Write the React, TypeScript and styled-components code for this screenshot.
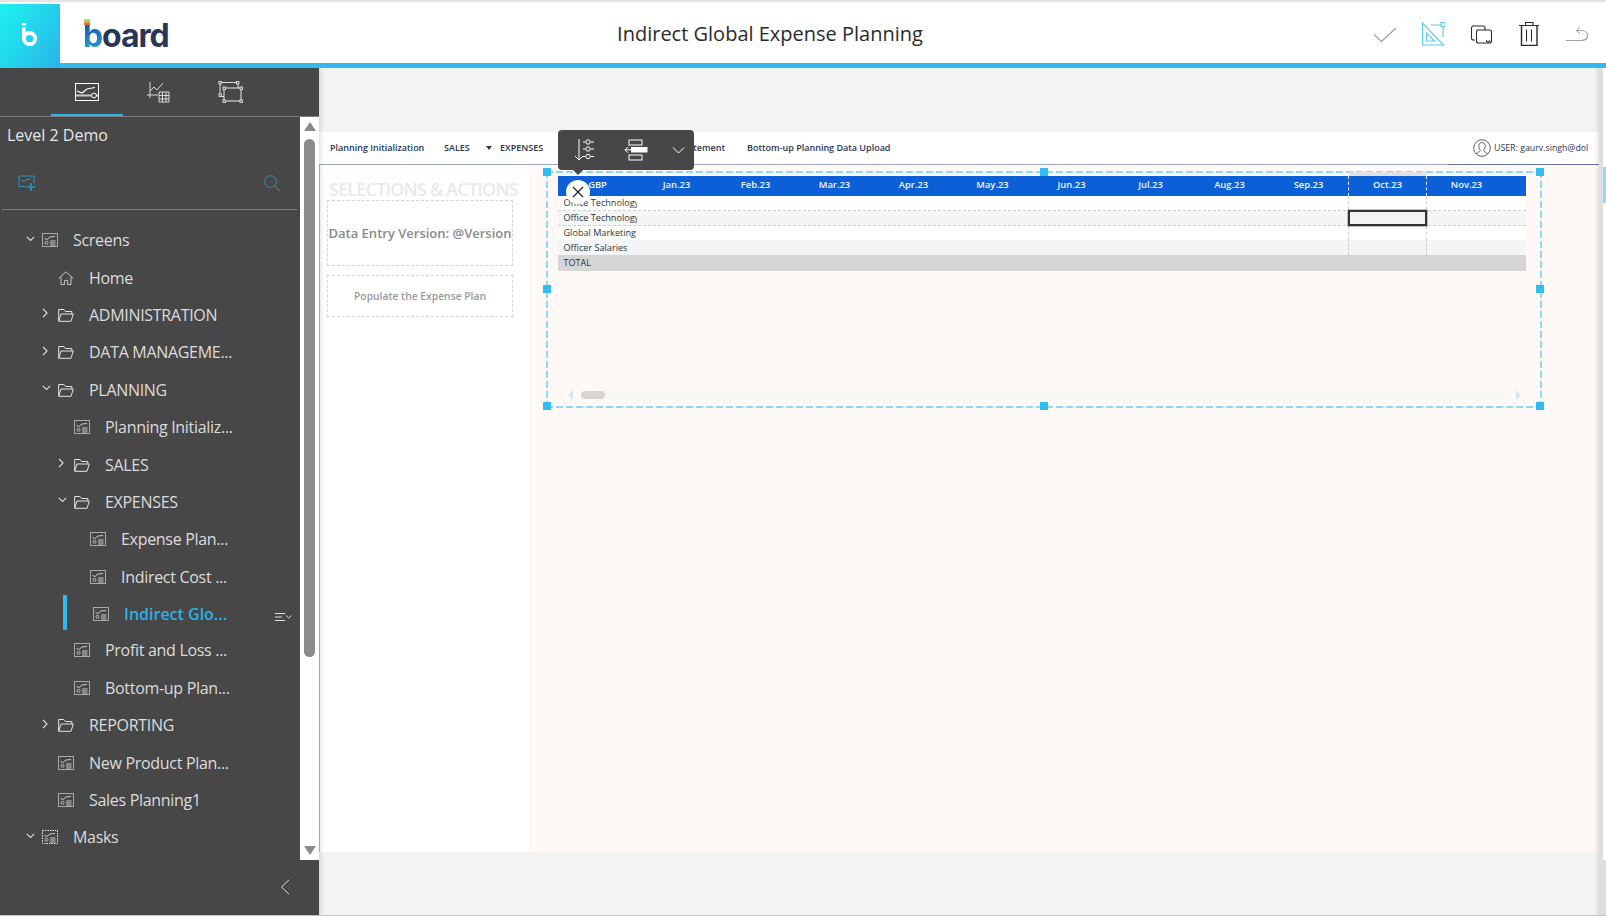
import React from "react";
import styled, { createGlobalStyle } from "styled-components";

const Global = createGlobalStyle`
  html, body { margin: 0; padding: 0; background: #fff; overflow: hidden; }
  #root { width: 1606px; height: 916px; }
  * { box-sizing: border-box; }
`;

const Page = styled.div`
  width: 1606px; height: 916px; display: flex; flex-direction: column;
  font-family: "Open Sans", "Liberation Sans", sans-serif;
  border-bottom: 1px solid #c4c4c4; overflow: hidden; background: #fff;
`;
const TopLine = styled.div`height: 2px; background: #e4e4e4; flex: none;`;
const Gap = styled.div`height: 2px; flex: none; background: #fff;`;
const Header = styled.header`
  height: 64px; flex: none; display: flex; border-bottom: 5px solid #2fb9ee; background: #fff; position: relative;
`;
const LogoTile = styled.div`
  width: 60px; height: 64px; flex: none; display: flex; justify-content: center; padding-top: 19px;
  background: linear-gradient(125deg, #1df3ee 0%, #2ab3e9 100%);
`;
const LogoWrap = styled.div`width: 190px; flex: none; padding: 13px 0 0 23px; position: relative;`;
const Wordmark = styled.div`
  font-family: "Inter", "Liberation Sans", sans-serif; font-weight: 700; font-size: 32px; line-height: 38px;
  letter-spacing: -1.1px; color: #2a3657; position: relative; width: fit-content;
`;
const WordB = styled.span`
  background: linear-gradient(#1a5aa8 20%, #2aa8e0 100%); -webkit-background-clip: text; background-clip: text; color: transparent;
`;
const Stripes = styled.div`
  position: absolute; left: 1px; top: 2px; width: 6px; height: 6px;
  background: linear-gradient(#c5d65a 0 33%, #e8a34f 33% 66%, #e0685a 66%);
`;
const Title = styled.h1`
  flex: 1; margin: 0; text-align: center; font-size: 20px; line-height: 25px; padding-top: 17px;
  font-weight: 400; color: #2b2b2b;
`;
const Actions = styled.div`
  width: 316px; flex: none; display: flex; justify-content: flex-end; gap: 24px; padding: 16px 17px 0 0;
`;
const ActionIcon = styled.svg`width: 24px; height: 26px; display: block; fill: none;`;

const Body = styled.div`flex: 1; display: flex; min-height: 0;`;
const Sidebar = styled.aside`
  width: 319px; flex: none; background: #474747; display: flex; flex-direction: column; color: #ddd;
`;
const Tabs = styled.div`
  height: 49px; flex: none; display: flex; padding-left: 51px; border-bottom: 1px solid #7c7c7c;
`;
const Tab = styled.div<{ $active?: boolean }>`
  width: 72px; height: 48px; display: flex; align-items: center; justify-content: center; padding-top: 1px;
  border-bottom: 2px solid ${(p) => (p.$active ? "#2fb4ea" : "transparent")};
`;
const TabIcon = styled.svg`width: 26px; height: 22px; display: block; fill: none;`;
const SideMiddle = styled.div`flex: 1; display: flex; min-height: 0;`;
const SideMain = styled.div`width: 300px; flex: none; display: flex; flex-direction: column;`;
const ProjectName = styled.div`
  font-size: 16px; line-height: 22px; color: #e6e6e6; padding: 7px 0 0 7px; height: 46px; flex: none;
`;
const ToolRow = styled.div`
  height: 47px; flex: none; margin: 0 3px 0 2px; padding: 11px 16px 0 16px; display: flex; justify-content: space-between;
  align-items: flex-start; border-bottom: 1px solid #7c7c7c;
`;
const ToolIcon = styled.svg`width: 18px; height: 18px; display: block; fill: none;`;
const Tree = styled.div`padding-top: 11.5px; display: flex; flex-direction: column;`;
const TreeRow = styled.div<{ $depth: number; $active?: boolean }>`
  height: ${(p) => (p.$active ? "36.4px" : "37.4px")}; flex: none; display: flex; align-items: center; position: relative;
  padding-left: ${(p) => 26 + p.$depth * 16 + (p.$active ? 3 : 0)}px;
  color: ${(p) => (p.$active ? "#2bb1e8" : "#dcdcdc")};
  font-weight: ${(p) => (p.$active ? 600 : 400)};
  font-size: 16px; white-space: nowrap; letter-spacing: ${(p) => (p.$active ? "0" : "-0.3px")};
`;
const ChevronDown = styled.svg`width: 9px; height: 8px; flex: none; margin-right: 7px; fill: none; stroke: #e0e0e0; stroke-width: 1.1; margin-top: -3px;`;
const ChevronRight = styled.svg`width: 6px; height: 10px; flex: none; margin: -3px 10px 0 0; fill: none; stroke: #e8e8e8; stroke-width: 1.1;`;
const ChevronGap = styled.div`width: 16px; flex: none;`;
const RowIcon = styled.svg`width: 16px; height: 14px; flex: none; margin-right: 15px; fill: none; display: block;`;
const ActiveBar = styled.div`position: absolute; left: 63px; top: 0; width: 4px; height: 35px; background: #2fb9ee;`;
const RowMenu = styled.svg`position: absolute; left: 275px; top: 18px; width: 17px; height: 8px; fill: none; stroke: #ddd; stroke-width: 1;`;
const VScroll = styled.div`
  width: 19px; flex: none; background: #fff; display: flex; flex-direction: column; align-items: center; padding: 5px 0 5px;
`;
const VArrow = styled.div<{ $up?: boolean }>`
  width: 0; height: 0; flex: none; border-left: 6px solid transparent; border-right: 6px solid transparent;
  ${(p) => (p.$up ? "border-bottom: 9px solid #8a8a8a;" : "border-top: 9px solid #8a8a8a;")}
`;
const VThumb = styled.div`width: 11px; height: 518px; margin-top: 8px; border-radius: 6px; background: #8c8c8c; flex: none;`;
const VSpace = styled.div`flex: 1;`;
const SideBottom = styled.div`
  height: 55px; flex: none; display: flex; justify-content: flex-end; padding: 19px 29px 0 0;
`;
const Collapse = styled.svg`width: 10px; height: 16px; display: block; fill: none; stroke: #ddd; stroke-width: 1;`;

const Canvas = styled.main`
  flex: 1; min-width: 0; display: flex; flex-direction: column; position: relative; background: #f3f3f3;
`;
const Shade = styled.div`
  position: absolute; inset: 0; pointer-events: none; z-index: 5;
  box-shadow: inset 6px 0 6px -6px rgba(0,0,0,.22), inset -6px 0 6px -6px rgba(0,0,0,.18);
`;
const CanvasCols = styled.div`flex: 1; display: flex; min-height: 0;`;
const CanvasInner = styled.div`flex: 1; min-width: 0; display: flex; flex-direction: column;`;
const TopBand = styled.div`height: 64px; flex: none;`;
const BottomBand = styled.div`flex: 1;`;
const Nav = styled.nav`
  height: 32px; flex: none; background: #fff; display: flex; align-items: center; padding: 0 10px 1px 11px;
  font-size: 9px; font-weight: 600; color: #2c3652; white-space: nowrap;
`;
const NavItem = styled.div<{ $w?: number; $right?: boolean }>`
  flex: ${(p) => (p.$w ? `0 0 ${p.$w}px` : "1")};
  ${(p) => (p.$right ? "text-align: right; padding-right: 22px;" : "")}
`;
const NavCaret = styled.div`
  flex: 0 0 14px; width: 14px; position: relative;
  &::before {
    content: ""; position: absolute; left: 0; top: -2px; border-left: 3px solid transparent; border-right: 3px solid transparent;
    border-top: 4px solid #2c3652;
  }
`;
const UserBlock = styled.div`display: flex; align-items: center; gap: 3px; font-weight: 400; font-size: 8.8px;`;
const UserIcon = styled.svg`width: 18px; height: 18px; fill: none; stroke: #4a4f63; stroke-width: .9; display: block;`;
const UserText = styled.div`width: 95px; overflow: hidden;`;
const NavRule = styled.div`
  height: 1px; flex: none;
  background: linear-gradient(90deg, #a0a8c0 0, #a0a8c0 1129px, #66749e 1129px);
`;
const Content = styled.div`height: 687px; flex: none; display: flex; background: #fef9f6;`;
const LeftPanel = styled.div`
  width: 210px; flex: none; background: #fff; border-left: 1px solid #d9a9ad; padding: 14px 0 0 7px;
`;
const PanelTitle = styled.div`
  font-size: 18px; line-height: 21px; color: #e9e9e9; font-weight: 600; white-space: nowrap; letter-spacing: -0.8px; padding-left: 2px;
`;
const DashedBox = styled.div<{ $h: number; $mt: number; $size: number; $weight: number; $color: string }>`
  width: 186px; height: ${(p) => p.$h}px; margin-top: ${(p) => p.$mt}px; border: 1px dashed #d4d4d4; display: flex;
  align-items: center; justify-content: center; white-space: nowrap;
  font-size: ${(p) => p.$size}px; font-weight: ${(p) => p.$weight}; color: ${(p) => p.$color};
`;
const Main = styled.div`flex: 1; min-width: 0; padding: 6px 0 0 17px;`;
const dash = "#8fd9f4";
const Frame = styled.div`
  width: 996px; height: 237px; position: relative; padding: 5px 0 0 12px;
  background-image:
    repeating-linear-gradient(90deg, ${dash} 0 7px, transparent 7px 10px),
    repeating-linear-gradient(90deg, ${dash} 0 7px, transparent 7px 10px),
    repeating-linear-gradient(0deg, ${dash} 0 7px, transparent 7px 10px),
    repeating-linear-gradient(0deg, ${dash} 0 7px, transparent 7px 10px);
  background-size: 100% 2px, 100% 2px, 2px 100%, 2px 100%;
  background-position: 0 0, 0 100%, 0 0, 100% 0;
  background-repeat: no-repeat;
`;
const Handle = styled.div<{ $x: string; $y: string }>`
  position: absolute; width: 8px; height: 8px; background: #31bdf2; z-index: 3;
  left: ${(p) => p.$x}; top: ${(p) => p.$y}; transform: translate(-50%, -50%);
`;
const Toolbar = styled.div`
  position: absolute; left: 12px; top: -41px; width: 136px; height: 40px; border-radius: 4px; background: #474747;
  z-index: 4; display: flex; align-items: center; padding-left: 16px;
  &::after {
    content: ""; position: absolute; left: 15px; bottom: -5px; border-left: 5px solid transparent;
    border-right: 5px solid transparent; border-top: 5px solid #474747;
  }
`;
const TbIcon = styled.svg<{ $w: number; $ml: number }>`
  width: ${(p) => p.$w}px; height: 24px; margin-left: ${(p) => p.$ml}px; display: block; fill: none; stroke: #fff; flex: none;
`;
const CloseBtn = styled.div`
  position: absolute; left: 20px; top: 9px; width: 24px; height: 24px; border-radius: 50%; background: #fff; z-index: 4;
  display: flex; align-items: center; justify-content: center;
`;
const CloseIcon = styled.svg`width: 12px; height: 12px; fill: none; stroke: #222; stroke-width: 1.2; display: block;`;
const Table = styled.div`width: 968px; display: flex; flex-direction: column; font-size: 9.1px; color: #333;`;
const Row = styled.div<{ $bg: string; $h: number; $dashed?: boolean }>`
  display: grid; grid-template-columns: repeat(12, 79px) 1fr; background: ${(p) => p.$bg}; height: ${(p) => p.$h}px;
  ${(p) => (p.$dashed ? "border-bottom: 1px dashed #d0d0d0;" : "")}
  position: relative;
`;
const HeadCell = styled.div<{ $oct?: boolean }>`
  display: flex; align-items: center; justify-content: center; color: #f2f6ff; font-weight: 600; position: relative;
  padding-bottom: 3px; font-size: 9.4px;
  ${(p) => (p.$oct ? "border-left: 1px dashed #e8eefc; border-right: 1px dashed #e8eefc;" : "")}
`;
const OctTab = styled.div`position: absolute; left: 0; right: 0; top: -4px; height: 4px; background: #e2e2e2;`;
const LabelCell = styled.div<{ $lh: number }>`
  overflow: hidden; white-space: nowrap; padding-left: 5.5px; line-height: ${(p) => p.$lh}px;
`;
const DataCell = styled.div<{ $oct?: boolean }>`
  position: relative;
  ${(p) => (p.$oct ? "border-left: 1px dashed #d0d0d0; border-right: 1px dashed #d0d0d0;" : "")}
`;
const SelectedMark = styled.div`
  position: absolute; left: -1px; right: -1px; top: -1px; bottom: -1px; border: 2px solid #333;
  background: #f2f3f4; box-shadow: 0 0 0 .5px #888; z-index: 1;
`;
const HScroll = styled.div`
  width: 968px; margin-top: 120px; padding: 0 5px 0 10px; display: flex; align-items: center; height: 8px;
`;
const HArrow = styled.div<{ $left?: boolean }>`
  width: 0; height: 0; flex: none; border-top: 5px solid transparent; border-bottom: 5px solid transparent;
  ${(p) => (p.$left ? "border-right: 5px solid #d3e6f4; margin-right: 8px;" : "border-left: 5px solid #d3e6f4; margin-left: 11px;")}
`;
const HTrack = styled.div`flex: 1; height: 8px; border-radius: 4px; background: #f8f6f3;`;
const HThumb = styled.div`width: 24px; height: 8px; border-radius: 4px; background: #d8d4d0;`;
const RightGutter = styled.div`width: 7px; flex: none; background: #dedede; display: flex; justify-content: flex-end;`;
const GutterInner = styled.div`
  width: 3px; height: 792px; background: linear-gradient(#fff 0 99px, #92d9f2 99px 135px, #fff 135px);
`;

const ScreenGlyph: React.FC<{ masked?: boolean }> = ({ masked }) => (
  <RowIcon viewBox="0 0 16 14">
    <rect x=".5" y=".5" width="15" height="13" stroke={masked ? "#e8e8e8" : "#a8a8a8"} strokeDasharray={masked ? "1.5 1" : undefined} />
    <path d="M2.5 5.5 5 6.5 8 4 13 3.5" stroke="#d6d6d6" strokeWidth=".9" />
    <circle cx="4.5" cy="9.8" r="1.5" stroke="#d6d6d6" strokeWidth=".8" />
    <path d="M8 8h5.5M8 10h5.5M8 12h5.5" stroke="#d6d6d6" strokeWidth=".9" />
  </RowIcon>
);
const FolderGlyph = () => (
  <RowIcon viewBox="0 0 16 14" stroke="#e4e4e4" strokeWidth="1">
    <path d="M.7 13V1.5h5.2l1.6 2h6.3V6" />
    <path d="M.7 13.3 3 6h12.3L13 13.3z" />
  </RowIcon>
);
const HomeGlyph = () => (
  <RowIcon viewBox="0 0 16 14" stroke="#c4c4c4" strokeWidth="1">
    <path d="M.8 7.4 8 .8l7.2 6.6" />
    <path d="M3 6v7.5h3.4V9.4h3.2v4.1H13V6" />
  </RowIcon>
);

type Item = { label: string; depth: number; icon: "screen" | "folder" | "home" | "mask"; chev?: "down" | "right"; active?: boolean };
const items: Item[] = [
  { label: "Screens", depth: 0, icon: "screen", chev: "down" },
  { label: "Home", depth: 1, icon: "home" },
  { label: "ADMINISTRATION", depth: 1, icon: "folder", chev: "right" },
  { label: "DATA MANAGEME...", depth: 1, icon: "folder", chev: "right" },
  { label: "PLANNING", depth: 1, icon: "folder", chev: "down" },
  { label: "Planning Initializ...", depth: 2, icon: "screen" },
  { label: "SALES", depth: 2, icon: "folder", chev: "right" },
  { label: "EXPENSES", depth: 2, icon: "folder", chev: "down" },
  { label: "Expense Plan...", depth: 3, icon: "screen" },
  { label: "Indirect Cost ...", depth: 3, icon: "screen" },
  { label: "Indirect Glo...", depth: 3, icon: "screen", active: true },
  { label: "Profit and Loss ...", depth: 2, icon: "screen" },
  { label: "Bottom-up Plan...", depth: 2, icon: "screen" },
  { label: "REPORTING", depth: 1, icon: "folder", chev: "right" },
  { label: "New Product Plan...", depth: 1, icon: "screen" },
  { label: "Sales Planning1", depth: 1, icon: "screen" },
  { label: "Masks", depth: 0, icon: "mask", chev: "down" },
];

const months = ["Jan.23", "Feb.23", "Mar.23", "Apr.23", "May.23", "Jun.23", "Jul.23", "Aug.23", "Sep.23", "Oct.23", "Nov.23"];
const rows = [
  { label: "Office Technology", bg: "#fff", h: 15, lh: 14, dashed: true },
  { label: "Office Technology", bg: "#f4f5f7", h: 15, lh: 14, dashed: true, selected: true },
  { label: "Global Marketing", bg: "#fff", h: 14, lh: 14 },
  { label: "Officer Salaries", bg: "#f4f5f7", h: 15, lh: 15 },
];

export default function App() {
  return (
    <Page>
      <Global />
      <TopLine />
      <Gap />
      <Header>
        <LogoTile>
          <svg width="18" height="26" viewBox="0 0 18 26" fill="none">
            <rect x="1" y="0" width="4" height="2.4" fill="#fff" />
            <rect x="1" y="4.5" width="3.6" height="13" fill="#fff" />
            <circle cx="8.6" cy="15.6" r="5.6" stroke="#fff" strokeWidth="3.8" />
          </svg>
        </LogoTile>
        <LogoWrap>
          <Wordmark><Stripes /><WordB>b</WordB>oard</Wordmark>
        </LogoWrap>
        <Title>Indirect Global Expense Planning</Title>
        <Actions>
          <ActionIcon viewBox="0 0 24 26" stroke="#9a9a9a" strokeWidth="1.1">
            <path d="M1 14.5 8.5 21.5 23 8" />
          </ActionIcon>
          <ActionIcon viewBox="0 0 24 26" stroke="#58c8f2" strokeWidth="1.1">
            <path d="M1.5 3v22h21z" />
            <path d="M5.5 13v8h8z" />
            <path d="M10 5h10M22 7v10" />
            <rect x="20" y="2.5" width="4" height="4" />
          </ActionIcon>
          <ActionIcon viewBox="0 0 24 26" stroke="#2b2b2b" strokeWidth="1.1">
            <path d="M6 20H4.5A2 2 0 0 1 2.500 18V8a2 2 0 0 1 2-2H14a2 2 0 0 1 2 2v2" />
            <path d="M8 10h12.500a2 2 0 0 1 2 2v9a2 2 0 0 1-2 2H9.500a2 2 0 0 1-2-2v-9z" />
            <path d="M17 20.500l2 1.800 2-1.800" />
          </ActionIcon>
          <ActionIcon viewBox="0 0 24 26" stroke="#2b2b2b" strokeWidth="1.1">
            <path d="M2 5.500h20M8.500 5V2.500h7.500V5" />
            <path d="M4.500 5.500V25.500h15.500V5.500" strokeWidth="1.400" />
            <path d="M9.500 9.500V21.500M14.500 9.500V21.500" />
          </ActionIcon>
          <ActionIcon viewBox="0 0 24 26" stroke="#a0a0a0" strokeWidth="1.2">
            <path d="M1 20.500h15c4.500 0 6.500-2 6.500-5 0-3-2.500-5-6-5H12" />
            <path d="M15 7l-3.500 3.500L15 14" strokeWidth="1" />
          </ActionIcon>
        </Actions>
      </Header>
      <Body>
        <Sidebar>
          <Tabs>
            <Tab $active>
              <TabIcon viewBox="0 0 26 22" stroke="#fff" strokeWidth="1">
                <rect x="1.500" y="2.500" width="23" height="17" />
                <path d="M3 10l5 2 5-4 8-1.500" strokeWidth="1.200" />
                <path d="M2 14.500h15.500M22 14.500h2" strokeWidth="2" stroke="#ccc" />
                <circle cx="20" cy="14.500" r="2.400" />
              </TabIcon>
            </Tab>
            <Tab>
              <TabIcon viewBox="0 0 26 22" stroke="#e8e8e8" strokeWidth=".9">
                <path d="M4 1v16M1 14h11" />
                <path d="M4 10l4-4 3 3 6-7" />
                <path d="M13 11h10v10H13zM13 14.500h10M13 18h10M16.500 11v10M20 11v10" />
              </TabIcon>
            </Tab>
            <Tab>
              <TabIcon viewBox="0 0 26 22" stroke="#dcdcdc" strokeWidth="1">
                <rect x="2" y="1.500" width="18" height="14" />
                <rect x="6" y="7" width="17" height="13" fill="#474747" stroke="#eee" />
                <rect x="1" y=".5" width="2.400" height="2.400" fill="#474747" />
                <rect x="18.500" y=".5" width="2.400" height="2.400" fill="#474747" />
                <rect x="1" y="13" width="2.400" height="2.400" fill="#474747" />
                <rect x="5" y="6" width="2.400" height="2.400" fill="#474747" />
                <rect x="22" y="6" width="2.400" height="2.400" fill="#474747" />
                <rect x="5" y="19" width="2.400" height="2.400" fill="#474747" />
                <rect x="22" y="19" width="2.400" height="2.400" fill="#474747" />
              </TabIcon>
            </Tab>
          </Tabs>
          <SideMiddle>
            <SideMain>
              <ProjectName>Level 2 Demo</ProjectName>
              <ToolRow>
                <ToolIcon viewBox="0 0 18 18" stroke="#2a96c4" strokeWidth="1">
                  <path d="M8 12.500H1V2h15v7" />
                  <path d="M3 6l3 1.500 3-2 4-.5" />
                  <path d="M13 9v8M9 13h8" strokeWidth="1.600" />
                </ToolIcon>
                <ToolIcon viewBox="0 0 18 18" stroke="#2a96c4" strokeWidth="1">
                  <circle cx="7.500" cy="7.500" r="5.800" />
                  <path d="M11.800 11.800 17 17" />
                </ToolIcon>
              </ToolRow>
              <Tree>
                {items.map((it) => (
                  <TreeRow key={it.label} $depth={it.depth} $active={it.active}>
                    {it.active && <ActiveBar />}
                    {it.chev === "down" && (
                      <ChevronDown viewBox="0 0 9 8"><path d="M.8 1.800 4.500 5.500 8.200 1.800" /></ChevronDown>
                    )}
                    {it.chev === "right" && (
                      <ChevronRight viewBox="0 0 6 10"><path d="M1 .8 5 5 1 9.200" /></ChevronRight>
                    )}
                    {!it.chev && <ChevronGap />}
                    {it.icon === "screen" && <ScreenGlyph />}
                    {it.icon === "mask" && <ScreenGlyph masked />}
                    {it.icon === "folder" && <FolderGlyph />}
                    {it.icon === "home" && <HomeGlyph />}
                    {it.label}
                    {it.active && (
                      <RowMenu viewBox="0 0 17 8">
                        <path d="M0 .5h10M0 4h7M0 7.500h10M11 2.500l2.700 2.500 2.700-2.500" />
                      </RowMenu>
                    )}
                  </TreeRow>
                ))}
              </Tree>
            </SideMain>
            <VScroll>
              <VArrow $up />
              <VThumb />
              <VSpace />
              <VArrow />
            </VScroll>
          </SideMiddle>
          <SideBottom>
            <Collapse viewBox="0 0 10 16"><path d="M9 .8 1.500 8 9 15.200" /></Collapse>
          </SideBottom>
        </Sidebar>
        <CanvasCols>
          <CanvasInner>
            <Canvas>
              <Shade />
              <TopBand />
              <Nav>
                <NavItem $w={114}>Planning Initialization</NavItem>
                <NavItem $w={42}>SALES</NavItem>
                <NavCaret />
                <NavItem $w={58}>EXPENSES</NavItem>
                <NavCaret />
                <NavItem $w={175} $right>Income Statement</NavItem>
                <NavItem>Bottom-up Planning Data Upload</NavItem>
                <UserBlock>
                  <UserIcon viewBox="0 0 18 18">
                    <circle cx="9" cy="9" r="8.300" />
                    <path d="M3.500 15c1-2 3.500-2 4-3.500C6 10 5.600 8 5.800 6.500 6.200 4 8 3.500 9 3.500s2.800.5 3.200 3c.2 1.500-.2 3.500-1.700 5 .5 1.500 3 1.500 4 3.500" />
                  </UserIcon>
                  <UserText>USER: gaurv.singh@dol</UserText>
                </UserBlock>
              </Nav>
              <NavRule />
              <Content>
                <LeftPanel>
                  <PanelTitle>SELECTIONS &amp; ACTIONS</PanelTitle>
                  <DashedBox $h={66} $mt={0} $size={13} $weight={600} $color="#8a8a8a">Data Entry Version: @Version</DashedBox>
                  <DashedBox $h={42} $mt={9} $size={10.300} $weight={600} $color="#9a9a9a">Populate the Expense Plan</DashedBox>
                </LeftPanel>
                <Main>
                  <Frame>
                    <Handle $x="1px" $y="1px" />
                    <Handle $x="498px" $y="1px" />
                    <Handle $x="994px" $y="1px" />
                    <Handle $x="1px" $y="118px" />
                    <Handle $x="994px" $y="118px" />
                    <Handle $x="1px" $y="235px" />
                    <Handle $x="498px" $y="235px" />
                    <Handle $x="994px" $y="235px" />
                    <Toolbar>
                      <TbIcon $w={24} $ml={0} viewBox="0 0 24 24" strokeWidth="1">
                        <path d="M5 1v21M1 18l4 4 4-4" />
                        <path d="M9 4h2.500M17 4h3M9 11h2.500M17 11h3M9 18.500h2.500M17 18.500h3" />
                        <circle cx="14" cy="4" r="2.200" />
                        <circle cx="14" cy="11" r="2.200" />
                        <circle cx="14" cy="18.500" r="2.200" />
                      </TbIcon>
                      <TbIcon $w={24} $ml={26} viewBox="0 0 24 24" strokeWidth="1">
                        <rect x="5" y="2" width="13" height="5" />
                        <rect x="7.500" y="9.500" width="15.500" height="4.500" fill="#fff" />
                        <rect x="5" y="17" width="13" height="5" />
                        <path d="M1 11.800h6.500M4 8.800l-3 3 3 3" />
                      </TbIcon>
                      <TbIcon $w={13} $ml={24} viewBox="0 0 13 24" strokeWidth="1">
                        <path d="M1 9.500 6.500 15 12 9.500" />
                      </TbIcon>
                    </Toolbar>
                    <CloseBtn>
                      <CloseIcon viewBox="0 0 12 12"><path d="M1 1l10 10M11 1 1 11" /></CloseIcon>
                    </CloseBtn>
                    <Table>
                      <Row $bg="#0b60d8" $h={20}>
                        <HeadCell>GBP</HeadCell>
                        {months.map((m) => (
                          <HeadCell key={m} $oct={m === "Oct.23"}>
                            {m === "Oct.23" && <OctTab />}
                            {m}
                          </HeadCell>
                        ))}
                      </Row>
                      {rows.map((r, i) => (
                        <Row key={i} $bg={r.bg} $h={r.h} $dashed={r.dashed}>
                          <LabelCell $lh={r.lh}>{r.label}</LabelCell>
                          {months.map((m) => (
                            <DataCell key={m} $oct={m === "Oct.23"}>
                              {r.selected && m === "Oct.23" && <SelectedMark />}
                            </DataCell>
                          ))}
                        </Row>
                      ))}
                      <Row $bg="#d6d6d6" $h={16}>
                        <LabelCell $lh={16}>TOTAL</LabelCell>
                      </Row>
                    </Table>
                    <HScroll>
                      <HArrow $left />
                      <HTrack><HThumb /></HTrack>
                      <HArrow />
                    </HScroll>
                  </Frame>
                </Main>
              </Content>
              <BottomBand />
            </Canvas>
          </CanvasInner>
          <RightGutter><GutterInner /></RightGutter>
        </CanvasCols>
      </Body>
    </Page>
  );
}
